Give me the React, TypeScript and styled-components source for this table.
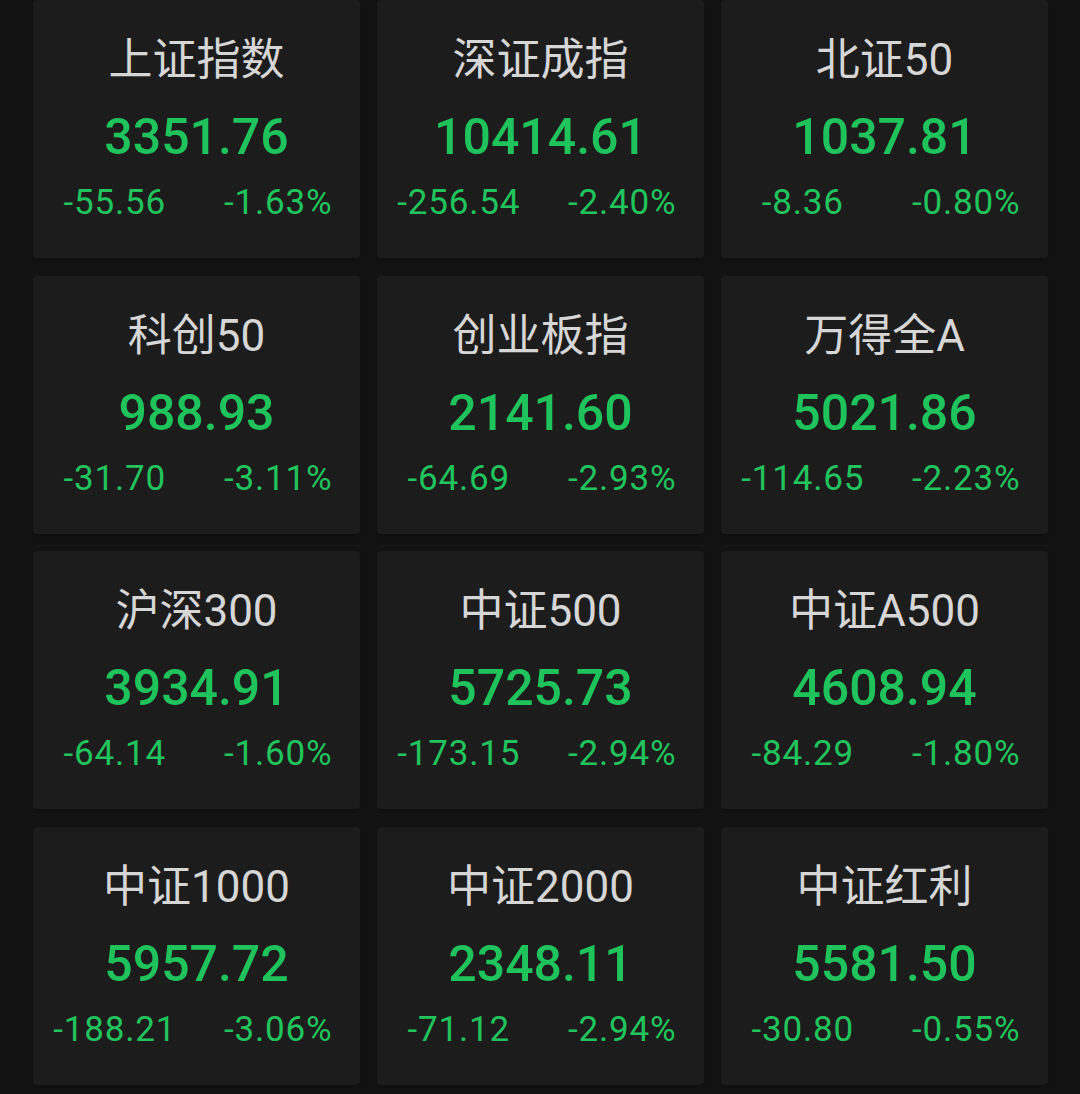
import React from "react";
import styled, { createGlobalStyle } from "styled-components";

const GlobalStyle = createGlobalStyle`
  html, body {
    margin: 0;
    padding: 0;
    background: #131313;
  }
  body {
    font-family: Roboto, "Noto Sans CJK SC", "Noto Sans", sans-serif;
  }
`;

const Page = styled.div`
  width: 1080px;
  height: 1094px;
  box-sizing: border-box;
  padding: 0 33px;
  background: #131313;
  overflow: hidden;
`;

const Grid = styled.div`
  display: grid;
  grid-template-columns: repeat(3, 327px);
  grid-auto-rows: 258px;
  column-gap: 17px;
  row-gap: 17.5px;
`;

const Card = styled.div`
  background: #1c1c1c;
  border-radius: 4px;
  box-shadow: 0 2px 4px rgba(0, 0, 0, 0.35);
  display: flex;
  flex-direction: column;
  align-items: center;
`;

const Title = styled.div`
  margin-top: 35px;
  height: 50px;
  line-height: 50px;
  font-family: Roboto, "Noto Sans CJK SC", sans-serif;
  font-size: 44px;
  font-weight: 400;
  color: #d6d6d6;
  white-space: nowrap;
`;

const Price = styled.div`
  margin-top: 22px;
  height: 60px;
  line-height: 60px;
  font-family: Roboto, "Noto Sans", sans-serif;
  font-size: 50px;
  font-weight: 500;
  color: #1fc35b;
`;

const ChangeRow = styled.div`
  margin-top: 16px;
  width: 100%;
  display: grid;
  grid-template-columns: 1fr 1fr;
`;

const Change = styled.div`
  height: 40px;
  line-height: 40px;
  text-align: center;
  font-family: Roboto, "Noto Sans", sans-serif;
  font-size: 35px;
  font-weight: 400;
  letter-spacing: 0.8px;
  color: #21c45c;
`;

type Index = {
  name: string;
  price: string;
  change: string;
  pct: string;
};

const data: Index[] = [
  { name: "上证指数", price: "3351.76", change: "-55.56", pct: "-1.63%" },
  { name: "深证成指", price: "10414.61", change: "-256.54", pct: "-2.40%" },
  { name: "北证50", price: "1037.81", change: "-8.36", pct: "-0.80%" },
  { name: "科创50", price: "988.93", change: "-31.70", pct: "-3.11%" },
  { name: "创业板指", price: "2141.60", change: "-64.69", pct: "-2.93%" },
  { name: "万得全A", price: "5021.86", change: "-114.65", pct: "-2.23%" },
  { name: "沪深300", price: "3934.91", change: "-64.14", pct: "-1.60%" },
  { name: "中证500", price: "5725.73", change: "-173.15", pct: "-2.94%" },
  { name: "中证A500", price: "4608.94", change: "-84.29", pct: "-1.80%" },
  { name: "中证1000", price: "5957.72", change: "-188.21", pct: "-3.06%" },
  { name: "中证2000", price: "2348.11", change: "-71.12", pct: "-2.94%" },
  { name: "中证红利", price: "5581.50", change: "-30.80", pct: "-0.55%" },
];

export default function App() {
  return (
    <>
      <GlobalStyle />
      <Page>
        <Grid>
          {data.map((d) => (
            <Card key={d.name}>
              <Title>{d.name}</Title>
              <Price>{d.price}</Price>
              <ChangeRow>
                <Change>{d.change}</Change>
                <Change>{d.pct}</Change>
              </ChangeRow>
            </Card>
          ))}
        </Grid>
      </Page>
    </>
  );
}
